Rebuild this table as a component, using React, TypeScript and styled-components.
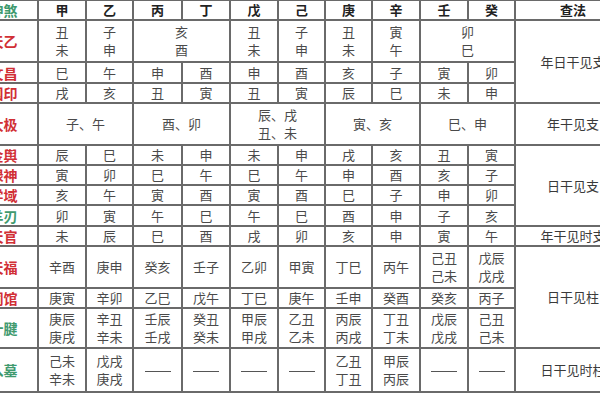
import React from "react";
import styled, { createGlobalStyle } from "styled-components";

const Global = createGlobalStyle`
  html, body { margin: 0; padding: 0; background: #fff; overflow: hidden; }
  body { width: 600px; height: 400px; }
`;

const Page = styled.div`
  width: 600px;
  height: 400px;
  overflow: hidden;
  background: #fff;
`;

const Table = styled.table`
  border-collapse: collapse;
  table-layout: fixed;
  margin-left: -30px;
  margin-top: -1px;
  font-family: "Noto Sans CJK SC", "Noto Sans", sans-serif;
  font-size: 13px;
  color: #444;
  width: 660px;
`;

const Row = styled.tr<{ $h: number }>`
  height: ${(p) => p.$h}px;
`;

const Cell = styled.td<{ $bold?: boolean }>`
  border: 2px solid #6a6a6a;
  padding: 0;
  text-align: center;
  vertical-align: middle;
  line-height: 18px;
  font-weight: ${(p) => (p.$bold ? 700 : 400)};
  color: ${(p) => (p.$bold ? "#222" : "#4a4a4a")};
  white-space: nowrap;
  overflow: hidden;
`;

const Label = styled.td<{ $tone: "red" | "green" }>`
  border: 2px solid #6a6a6a;
  border-left: none;
  padding: 0;
  text-align: center;
  vertical-align: middle;
  line-height: 18px;
  font-weight: 700;
  font-size: 14px;
  color: ${(p) => (p.$tone === "red" ? "#d12f35" : "#3f9a6e")};
  white-space: nowrap;
  overflow: hidden;
`;

const Method = styled.td`
  border: 2px solid #6a6a6a;
  border-right: none;
  padding: 0;
  text-align: center;
  vertical-align: middle;
  line-height: 18px;
  color: #3a3a3a;
  white-space: nowrap;
  overflow: hidden;
`;

const Head = styled(Method)`
  font-weight: 700;
  color: #222;
`;

const Dash = styled.span`
  display: inline-block;
  width: 26px;
  height: 1px;
  background: #555;
  vertical-align: middle;
`;

const widths = [68, 48, 47, 49, 48, 48, 47, 47, 48, 48, 47, 115];

type C = string | [string, number];

const Lines = ({ t }: { t: string }) => {
  if (t === "—") return <Dash />;
  const parts = t.split("|");
  return (
    <>
      {parts.map((p, i) => (
        <React.Fragment key={i}>
          {i > 0 && <br />}
          {p}
        </React.Fragment>
      ))}
    </>
  );
};

type RowDef = {
  label: string;
  tone: "red" | "green";
  h: number;
  cells: C[];
  method?: [string, number];
};

const rows: RowDef[] = [
  {
    label: "天乙",
    tone: "red",
    h: 42,
    cells: ["丑|未", "子|申", ["亥|酉", 2], "丑|未", "子|申", "丑|未", "寅|午", ["卯|巳", 2]],
    method: ["年日干见支", 3],
  },
  { label: "文昌", tone: "red", h: 21, cells: ["巳", "午", "申", "酉", "申", "酉", "亥", "子", "寅", "卯"] },
  { label: "国印", tone: "red", h: 20, cells: ["戌", "亥", "丑", "寅", "丑", "寅", "辰", "巳", "未", "申"] },
  {
    label: "太极",
    tone: "red",
    h: 42,
    cells: [["子、午", 2], ["酉、卯", 2], ["辰、戌|丑、未", 2], ["寅、亥", 2], ["巳、申", 2]],
    method: ["年干见支", 1],
  },
  {
    label: "金舆",
    tone: "red",
    h: 20,
    cells: ["辰", "巳", "未", "申", "未", "申", "戌", "亥", "丑", "寅"],
    method: ["日干见支", 4],
  },
  { label: "禄神", tone: "red", h: 20, cells: ["寅", "卯", "巳", "午", "巳", "午", "申", "酉", "亥", "子"] },
  { label: "学域", tone: "red", h: 20, cells: ["亥", "午", "寅", "酉", "寅", "酉", "巳", "子", "申", "卯"] },
  { label: "羊刃", tone: "green", h: 21, cells: ["卯", "寅", "午", "巳", "午", "巳", "酉", "申", "子", "亥"] },
  {
    label: "天官",
    tone: "red",
    h: 20,
    cells: ["未", "辰", "巳", "酉", "戌", "卯", "亥", "申", "寅", "午"],
    method: ["年干见时支", 1],
  },
  {
    label: "天福",
    tone: "red",
    h: 42,
    cells: ["辛酉", "庚申", "癸亥", "壬子", "乙卯", "甲寅", "丁巳", "丙午", "己丑|己未", "戊辰|戊戌"],
    method: ["日干见柱", 3],
  },
  { label: "词馆", tone: "red", h: 19, cells: ["庚寅", "辛卯", "乙巳", "戊午", "丁巳", "庚午", "壬申", "癸酉", "癸亥", "丙子"] },
  {
    label: "十腱",
    tone: "green",
    h: 40,
    cells: ["庚辰|庚戌", "辛丑|辛未", "壬辰|壬戌", "癸丑|癸未", "甲辰|甲戌", "乙丑|乙未", "丙辰|丙戌", "丁丑|丁未", "戊辰|戊戌", "己丑|己未"],
  },
  {
    label: "入墓",
    tone: "green",
    h: 44,
    cells: ["己未|辛未", "戊戌|庚戌", "—", "—", "—", "—", "乙丑|丁丑", "甲辰|丙辰", "—", "—"],
    method: ["日干见时柱", 1],
  },
];

const stems = ["甲", "乙", "丙", "丁", "戊", "己", "庚", "辛", "壬", "癸"];

export default function App() {
  return (
    <Page>
      <Global />
      <Table>
        <colgroup>
          {widths.map((w, i) => (
            <col key={i} style={{ width: w }} />
          ))}
        </colgroup>
        <tbody>
          <Row $h={18}>
            <Label $tone="green">神煞</Label>
            {stems.map((s) => (
              <Cell key={s} $bold>
                {s}
              </Cell>
            ))}
            <Head>查法</Head>
          </Row>
          {rows.map((r) => (
            <Row key={r.label} $h={r.h}>
              <Label $tone={r.tone}>{r.label}</Label>
              {r.cells.map((c, i) => {
                const [t, span] = typeof c === "string" ? [c, 1] : c;
                return (
                  <Cell key={i} colSpan={span}>
                    <Lines t={t} />
                  </Cell>
                );
              })}
              {r.method && <Method rowSpan={r.method[1]}>{r.method[0]}</Method>}
            </Row>
          ))}
        </tbody>
      </Table>
    </Page>
  );
}
